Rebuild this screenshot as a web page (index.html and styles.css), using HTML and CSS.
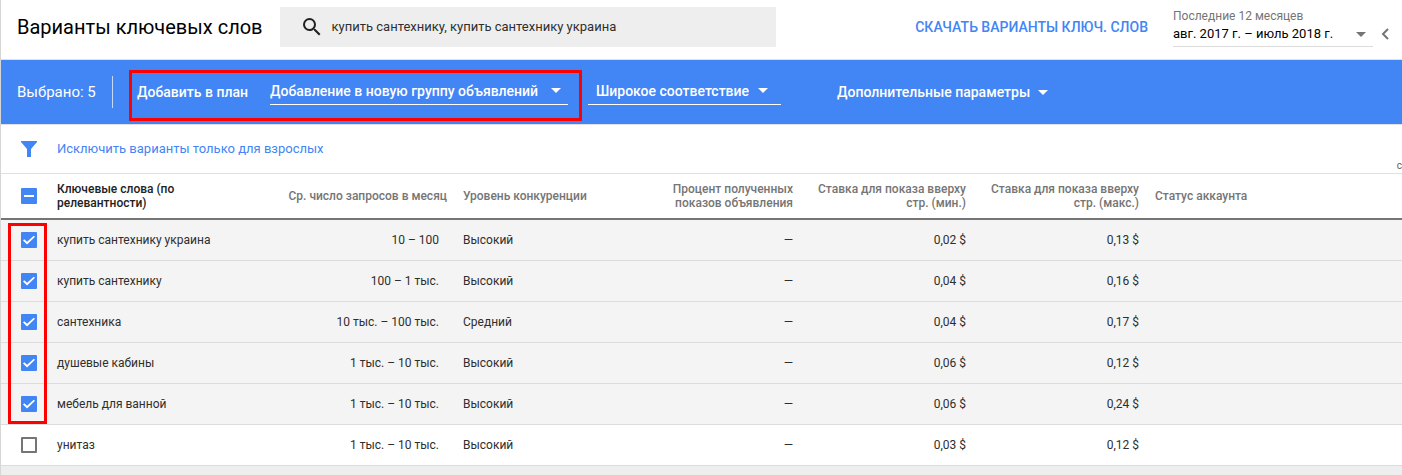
FILE: index.html
```html
<!DOCTYPE html>
<html lang="ru">
<head>
<meta charset="utf-8">
<title>Варианты ключевых слов</title>
<link rel="stylesheet" href="styles.css">
</head>
<body>
<main class="page">
  <header class="header">
    <h1 class="title">Варианты ключевых слов</h1>
    <label class="search">
      <svg class="search-icon" viewBox="0 0 24 24" aria-hidden="true"><path d="M15.5 14h-.79l-.28-.27A6.47 6.47 0 0 0 16 9.5 6.5 6.5 0 1 0 9.5 16c1.61 0 3.09-.59 4.23-1.57l.27.28v.79l5 4.99L20.49 19l-4.99-5zm-6 0C7.01 14 5 11.99 5 9.5S7.01 5 9.5 5 14 7.01 14 9.5 11.99 14 9.5 14z"/></svg>
      <input class="search-input" type="text" aria-label="Ключевые слова" value="купить сантехнику, купить сантехнику украина">
    </label>
    <button class="download" type="button">СКАЧАТЬ ВАРИАНТЫ КЛЮЧ. СЛОВ</button>
    <div class="period">
      <label class="period-label" for="period">Последние 12 месяцев</label>
      <div class="picker">
        <select class="picker-select" id="period"><option>авг. 2017 г. – июль 2018 г.</option></select>
        <svg class="arrow" viewBox="0 0 10 5" aria-hidden="true"><path d="M0 0h10L5 5z"/></svg>
      </div>
    </div>
    <button class="prev" type="button" aria-label="Предыдущий период"><svg viewBox="0 0 8 12" aria-hidden="true"><path d="M7 1L2 6l5 5"/></svg></button>
  </header>

  <section class="actions">
    <span class="count">Выбрано: 5</span>
    <div class="plan">
      <button class="action" type="button">Добавить в план</button>
      <div class="picker">
        <select class="picker-select" aria-label="Группа объявлений"><option>Добавление в новую группу объявлений</option></select>
        <svg class="arrow" viewBox="0 0 10 5" aria-hidden="true"><path d="M0 0h10L5 5z"/></svg>
      </div>
    </div>
    <div class="picker match">
      <select class="picker-select" aria-label="Тип соответствия"><option>Широкое соответствие</option></select>
      <svg class="arrow" viewBox="0 0 10 5" aria-hidden="true"><path d="M0 0h10L5 5z"/></svg>
    </div>
    <button class="action more" type="button">Дополнительные параметры <svg class="arrow" viewBox="0 0 10 5" aria-hidden="true"><path d="M0 0h10L5 5z"/></svg></button>
  </section>

  <section class="filters">
    <svg class="funnel" viewBox="0 0 16 16" aria-hidden="true"><path d="M0 0h16v1l-6 7v8H6V8L0 1z"/></svg>
    <a class="filter-link" href="#">Исключить варианты только для взрослых</a>
    <span class="columns">с</span>
  </section>

  <div class="table-wrap">
    <table class="table">
      <colgroup><col class="col-check"><col class="col-name"><col class="col-volume"><col class="col-mid"><col class="col-mid"><col class="col-mid"><col class="col-mid"><col></colgroup>
      <thead>
        <tr>
          <th class="pick"><input class="box partial" type="checkbox" aria-label="Выбрать все"></th>
          <th class="sorted">Ключевые слова (по релевантности)</th>
          <th class="num">Ср. число запросов в месяц</th>
          <th>Уровень конкуренции</th>
          <th class="num">Процент полученных показов объявления</th>
          <th class="num">Ставка для показа вверху стр. (мин.)</th>
          <th class="num">Ставка для показа вверху стр. (макс.)</th>
          <th>Статус аккаунта</th>
        </tr>
      </thead>
      <tbody>
        <tr class="selected"><td class="pick"><input class="box" type="checkbox" id="k1" checked></td><td><label for="k1">купить сантехнику украина</label></td><td class="num volume">10 – 100</td><td>Высокий</td><td class="num">—</td><td class="num">0,02 $</td><td class="num">0,13 $</td><td></td></tr>
        <tr class="selected"><td class="pick"><input class="box" type="checkbox" id="k2" checked></td><td><label for="k2">купить сантехнику</label></td><td class="num volume">100 – 1 тыс.</td><td>Высокий</td><td class="num">—</td><td class="num">0,04 $</td><td class="num">0,16 $</td><td></td></tr>
        <tr class="selected"><td class="pick"><input class="box" type="checkbox" id="k3" checked></td><td><label for="k3">сантехника</label></td><td class="num volume">10 тыс. – 100 тыс.</td><td>Средний</td><td class="num">—</td><td class="num">0,04 $</td><td class="num">0,17 $</td><td></td></tr>
        <tr class="selected"><td class="pick"><input class="box" type="checkbox" id="k4" checked></td><td><label for="k4">душевые кабины</label></td><td class="num volume">1 тыс. – 10 тыс.</td><td>Высокий</td><td class="num">—</td><td class="num">0,06 $</td><td class="num">0,12 $</td><td></td></tr>
        <tr class="selected"><td class="pick"><input class="box" type="checkbox" id="k5" checked></td><td><label for="k5">мебель для ванной</label></td><td class="num volume">1 тыс. – 10 тыс.</td><td>Высокий</td><td class="num">—</td><td class="num">0,06 $</td><td class="num">0,24 $</td><td></td></tr>
        <tr><td class="pick"><input class="box" type="checkbox" id="k6"></td><td><label for="k6">унитаз</label></td><td class="num volume">1 тыс. – 10 тыс.</td><td>Высокий</td><td class="num">—</td><td class="num">0,03 $</td><td class="num">0,12 $</td><td></td></tr>
      </tbody>
    </table>
    <div class="mark"></div>
  </div>
</main>
</body>
</html>
```

FILE: styles.css
```css
* { box-sizing: border-box; }

body {
  margin: 0;
  background: #eee;
  color: #2e2e2e;
  font: 12px/14px Roboto, sans-serif;
  overflow: hidden;
}

button, input, select {
  margin: 0;
  padding: 0;
  border: 0;
  background: none;
  color: inherit;
  font: inherit;
  appearance: none;
  outline: none;
}

button { cursor: pointer; white-space: nowrap; }

.page {
  min-height: 100vh;
  border-left: 1px solid #d6d6d6;
}

.header {
  display: flex;
  align-items: center;
  height: 60px;
  padding: 0 13px 0 16px;
  background: #fff;
  border-bottom: 1px solid #e0e0e0;
}

.title {
  margin: 0 17px 6px 0;
  color: #000;
  font-size: 20px;
  font-weight: 400;
  line-height: 24px;
  white-space: nowrap;
}

.search {
  display: flex;
  align-items: center;
  gap: 8px;
  width: 496px;
  height: 40px;
  margin-bottom: 6px;
  padding: 0 20px;
  background: #eee;
}

.search-icon { width: 24px; height: 24px; fill: #212121; }
.search-input { flex: 1; font-size: 13px; line-height: 20px; }

.download {
  margin: 0 25px 6px auto;
  color: #4285f4;
  font-size: 14px;
  font-weight: 500;
}

.period { width: 200px; margin-bottom: 4px; }
.period-label { display: block; color: #757575; font-size: 12px; line-height: 16px; }

.picker {
  display: flex;
  align-items: center;
  gap: 8px;
  padding-bottom: 2px;
  border-bottom: 1px solid;
}

.picker-select { cursor: pointer; line-height: 20px; }
.arrow { flex: none; width: 10px; height: 5px; fill: currentColor; }

.period .picker {
  justify-content: space-between;
  height: 23px;
  padding-right: 7px;
  border-color: #dcdcdc;
  color: #757575;
}

.period .picker-select { color: #000; font-size: 13px; }

.prev { display: flex; margin: 8px 0 0 8px; }
.prev svg { width: 8px; height: 12px; fill: none; stroke: #757575; stroke-width: 2; }

.actions {
  display: flex;
  align-items: center;
  height: 64px;
  background: #4285f4;
  color: #fff;
  font-size: 14px;
  font-weight: 500;
}

.count {
  width: 112px;
  padding-left: 16px;
  border-right: 1px solid #c6dafc;
  font-size: 15px;
  font-weight: 400;
  line-height: 32px;
  white-space: nowrap;
}

.plan {
  display: flex;
  align-items: center;
  justify-content: space-between;
  width: 453px;
  height: 51px;
  margin: 6px 6px 0 16px;
  padding: 0 11px 6px 5px;
  border: 3px solid #f00;
}

.actions .picker { height: 26px; }
.actions .plan .picker { gap: 12px; width: 298px; }
.actions .match { width: 193px; padding-left: 8px; }
.more { display: flex; align-items: center; gap: 8px; margin-left: 56px; }

.filters {
  display: flex;
  align-items: center;
  gap: 20px;
  height: 50px;
  padding-left: 20px;
  background: #fff;
  border: solid #e0e0e0;
  border-width: 1px 0;
  overflow: hidden;
}

.funnel { width: 16px; height: 16px; fill: #4285f4; }
.filter-link { color: #4285f4; font-size: 13px; text-decoration: none; }
.columns { align-self: flex-end; margin-left: auto; color: #616161; font-size: 10px; }

.table-wrap { position: relative; }

.table {
  width: 100%;
  table-layout: fixed;
  border-collapse: separate;
  border-spacing: 0;
  background: #fff;
}

.col-check { width: 48px; }
.col-name { width: 166px; }
.col-volume { width: 240px; }
.col-mid { width: 173px; }

.table th, .table td { padding: 0 8px; text-align: left; vertical-align: middle; white-space: nowrap; }
.table th { height: 46px; border-bottom: 2px solid #757575; color: #757575; font-weight: 500; white-space: normal; }
.table td { height: 41px; border-bottom: 1px solid #dcdcdc; }
.table .sorted { color: #212121; }
.table .num { text-align: right; }
.table .volume { padding-right: 16px; }
.table .pick { padding: 0 0 0 20px; }
.selected { background: #f4f4f4; }

.box {
  display: block;
  width: 16px;
  height: 16px;
  border: 2px solid #757575;
  border-radius: 1px;
}

.box:checked, .partial {
  display: grid;
  place-items: center;
  border: 0;
  background: #4285f4;
}

.box:checked::before {
  content: "";
  width: 12px;
  height: 9px;
  background: #fff;
  clip-path: polygon(0 55%, 10% 42%, 34% 70%, 90% 3%, 100% 15%, 34% 100%);
}

.partial::before { content: ""; width: 10px; height: 2px; background: #fff; }

.mark {
  position: absolute;
  top: 49px;
  left: 7px;
  width: 39px;
  height: 201px;
  border: 3px solid #f00;
  pointer-events: none;
}
```
